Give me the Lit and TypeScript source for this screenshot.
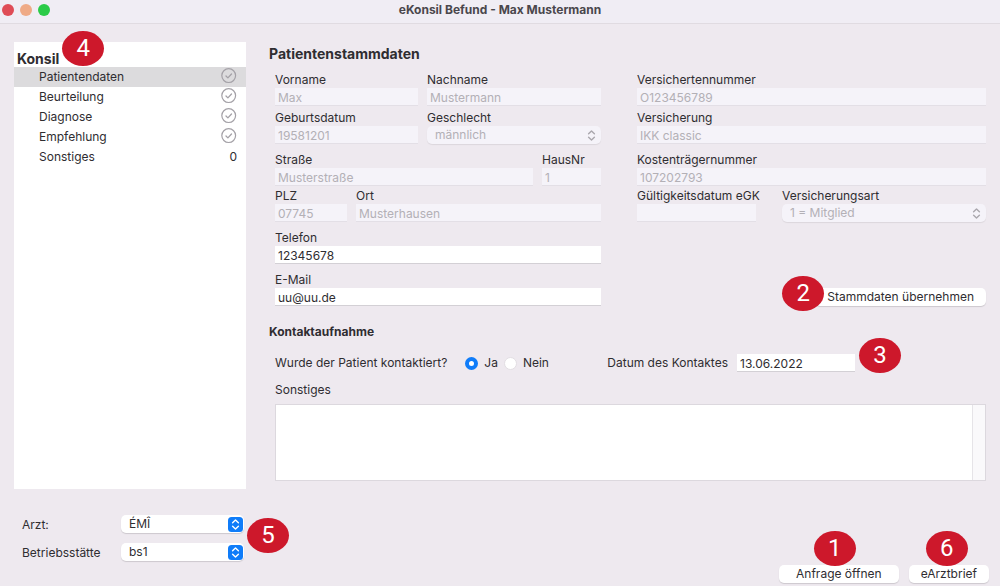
import { LitElement, html, css, svg, nothing } from "lit";
import { customElement, property, state } from "lit/decorators.js";

const base = css`
  *,
  *::before,
  *::after {
    box-sizing: border-box;
  }
  input,
  select,
  button,
  textarea {
    font: inherit;
    color: inherit;
    margin: 0;
    border: 0;
    outline: none;
  }
`;

/** Numbered red marker. The host is positioned by whoever places it. */
@customElement("step-badge")
export class StepBadge extends LitElement {
  static styles = css`
    :host {
      display: flex;
      align-items: center;
      justify-content: center;
      width: 42px;
      height: 35px;
      border-radius: 50%;
      background: #cd182b;
      color: #fff;
      font-family: "Liberation Sans Narrow", Roboto, sans-serif;
      font-size: 24px;
      font-weight: 400;
      line-height: 35px;
      pointer-events: none;
    }
  `;
  render() {
    return html`<slot></slot>`;
  }
}

/** Rounded pop-up menu with a double chevron at its right end. */
@customElement("popup-select")
export class PopupSelect extends LitElement {
  @property() label = "";
  @property() value = "";
  @property({ type: Boolean }) disabled = false;
  @property({ type: Boolean }) stacked = false;

  static styles = [
    base,
    css`
      :host {
        display: block;
        min-width: 0;
      }
      .row {
        display: flex;
        align-items: center;
      }
      .row label {
        width: 99px;
        line-height: 18px;
        padding-top: 2px;
      }
      .stack label {
        display: block;
        line-height: 16px;
      }
      .box {
        position: relative;
        flex: 1;
      }
      select {
        display: block;
        appearance: none;
        width: 100%;
        height: 18px;
        padding: 0 20px 1px 8px;
        border-radius: 5px;
        background: #fff;
        box-shadow: 0 1px 1px rgba(0, 0, 0, 0.14);
      }
      select:disabled {
        background: #f5f3f9;
        color: #b3b0b6;
        opacity: 1;
        box-shadow: 0 1px 1px rgba(0, 0, 0, 0.08);
      }
      svg {
        position: absolute;
        right: 1px;
        top: 2px;
        width: 15px;
        height: 15px;
        pointer-events: none;
      }
      .stack svg {
        right: 2px;
      }
    `,
  ];

  render() {
    return html`<div class=${this.stacked ? "stack" : "row"}>
      <label for="s">${this.label}</label>
      <div class="box">
        <select id="s" ?disabled=${this.disabled}>
          <option>${this.value}</option>
        </select>
        <svg viewBox="0 0 15 15" aria-hidden="true">
          ${this.disabled
            ? nothing
            : svg`<rect width="15" height="15" rx="3.5" fill="#0f7cf9"/>`}
          <path
            d="M4.6 5.7 7.5 2.9l2.9 2.8M4.6 9.3l2.9 2.8 2.9-2.8"
            fill="none"
            stroke=${this.disabled ? "#aaa7ad" : "#fff"}
            stroke-width="1.4"
            stroke-linecap="round"
            stroke-linejoin="round"
          />
        </svg>
      </div>
    </div>`;
  }
}

/** Caption above a flat text box. */
@customElement("text-field")
export class TextField extends LitElement {
  @property() label = "";
  @property() value = "";
  @property({ type: Boolean }) disabled = false;

  static styles = [
    base,
    css`
      :host {
        display: block;
        min-width: 0;
      }
      label {
        display: block;
        line-height: 16px;
        white-space: nowrap;
      }
      input {
        display: block;
        width: 100%;
        height: 18px;
        padding: 1px 3px 0;
        background: #fff;
        border-bottom: 1px solid #d3d0d5;
      }
      input:disabled {
        background: #f5f3f9;
        border-color: #e3dfe6;
        color: #b3b0b6;
      }
    `,
  ];

  render() {
    return html`<label for="i">${this.label}</label>
      <input id="i" type="text" .value=${this.value} ?disabled=${this.disabled} />`;
  }
}

interface Section {
  name: string;
  count?: number;
}

@customElement("app-root")
export class AppRoot extends LitElement {
  @state() private active = "Patientendaten";
  @state() private contacted = true;

  private sections: Section[] = [
    { name: "Patientendaten" },
    { name: "Beurteilung" },
    { name: "Diagnose" },
    { name: "Empfehlung" },
    { name: "Sonstiges", count: 0 },
  ];

  static styles = [
    base,
    css`
      :host {
        display: flex;
        flex-direction: column;
        min-height: 100vh;
        background: #eee9ef;
        color: #2f2d31;
        font-family: Inter, "Liberation Sans", sans-serif;
        font-size: 12px;
        line-height: 16px;
      }
      .titlebar {
        display: grid;
        grid-template-columns: 1fr auto 1fr;
        align-items: center;
        height: 24px;
        padding: 0 2px 3px;
        background: #f0edf4;
        border-bottom: 1px solid #e0dbe1;
      }
      .lights {
        display: flex;
        gap: 6px;
      }
      .light {
        width: 12px;
        height: 12px;
        border-radius: 50%;
      }
      .red {
        background: #df4c56;
      }
      .amber {
        background: #efaa86;
      }
      .green {
        background: #2bcb48;
      }
      .title {
        margin: 0;
        font-size: 12px;
        line-height: 16px;
        font-weight: 700;
        color: #4a474c;
      }
      .content {
        flex: 1;
        display: grid;
        grid-template-columns: 232px 1fr;
        gap: 23px;
        padding: 18px 14px 0;
      }
      .sidebar {
        background: #fff;
        padding-top: 9px;
      }
      .heading {
        position: relative;
        width: fit-content;
        margin: 0 0 0 3px;
        font-size: 14px;
        line-height: 16px;
        font-weight: 700;
      }
      .sections {
        list-style: none;
        margin: 0;
        padding: 0;
      }
      .section {
        display: flex;
        align-items: center;
        justify-content: space-between;
        width: 100%;
        height: 20px;
        padding: 0 9px 0 25px;
        background: none;
        text-align: left;
      }
      .section.active {
        background: #dcdbdd;
      }
      .check {
        width: 16px;
        height: 18px;
      }
      h2 {
        margin: 0;
        font-weight: 700;
      }
      .big {
        font-size: 14px;
        line-height: 18px;
        padding-top: 3px;
      }
      .small {
        font-size: 12px;
        line-height: 16px;
        margin-top: 18px;
      }
      .inset {
        padding-left: 6px;
      }
      .columns {
        display: grid;
        grid-template-columns: 326fr 349fr;
        gap: 36px;
        padding-top: 9px;
      }
      .pair {
        display: grid;
        gap: 9px;
      }
      .group {
        display: flex;
        flex-direction: column;
        gap: 4px;
      }
      .group.tight {
        gap: 2px;
      }
      .fields {
        display: flex;
        flex-direction: column;
        gap: 8px;
      }
      .names {
        grid-template-columns: 143fr 174fr;
      }
      .street {
        grid-template-columns: 1fr 59px;
      }
      .city {
        grid-template-columns: 72px 1fr;
      }
      .insurance {
        grid-template-columns: 119px 1fr;
        gap: 26px;
      }
      .action {
        display: flex;
        justify-content: flex-end;
        margin-top: auto;
      }
      .anchor {
        position: relative;
        display: flex;
      }
      .push {
        height: 18px;
        padding: 0 12px;
        border-radius: 5px;
        background: #fff;
        box-shadow: 0 1px 1px rgba(0, 0, 0, 0.14);
        line-height: 18px;
        white-space: nowrap;
      }
      .contact {
        display: flex;
        align-items: center;
        height: 18px;
        margin-top: 14px;
      }
      .radios {
        display: flex;
        align-items: center;
        margin: 0 auto 0 18px;
        gap: 6px;
      }
      .radio {
        display: flex;
        align-items: center;
        gap: 6px;
      }
      .radio input {
        appearance: none;
        width: 13px;
        height: 13px;
        border-radius: 50%;
        background: #fff;
        border: 1px solid #e2dee3;
      }
      .radio input:checked {
        border: 4px solid #0f7cf9;
      }
      .date {
        display: flex;
        align-items: center;
        gap: 9px;
        margin-right: 131px;
      }
      .date input {
        width: 118px;
        height: 18px;
        padding: 1px 3px 0;
        background: #fff;
        border-bottom: 1px solid #d3d0d5;
      }
      .notes-label {
        display: block;
        margin-top: 10px;
        line-height: 16px;
      }
      .notes {
        display: flex;
        height: 77px;
        margin-top: 6px;
        background: #fff;
        border: 1px solid #dcd8de;
      }
      .notes textarea {
        flex: 1;
        resize: none;
        overflow: hidden;
        padding: 2px 3px;
        background: none;
      }
      .track {
        width: 13px;
        background: #faf9fb;
        border-left: 1px solid #e6e4e8;
      }
      .footer {
        display: flex;
        justify-content: space-between;
        align-items: flex-end;
        padding: 25px 11px 3px 22px;
      }
      .practice {
        position: relative;
        display: flex;
        flex-direction: column;
        gap: 8px;
        width: 222px;
        padding-bottom: 21px;
      }
      .buttons {
        display: flex;
        gap: 10px;
      }
      .wide {
        padding: 0 17px;
      }
      step-badge {
        position: absolute;
        z-index: 1;
      }
      .on-heading {
        left: 100%;
        bottom: 1px;
        margin-left: 3px;
      }
      .on-left {
        right: 100%;
        margin-right: -9px;
        top: -12px;
      }
      .on-right {
        left: 100%;
        margin-left: 4px;
        top: -16px;
      }
      .on-top {
        left: calc(50% - 25px);
        bottom: 17px;
      }
      .on-top.center {
        left: calc(50% - 23px);
      }
      .on-practice {
        left: 100%;
        margin-left: 3px;
        top: 4px;
      }
    `,
  ];

  private renderSection(s: Section) {
    return html`<li>
      <button
        class="section ${s.name === this.active ? "active" : ""}"
        @click=${() => (this.active = s.name)}
      >
        <span>${s.name}</span>
        ${s.count === undefined
          ? html`<svg class="check" viewBox="0 0 16 18" aria-hidden="true">
              <g fill="none" stroke="#a4a1a7" stroke-width="1.2">
                <circle cx="7.7" cy="7.6" r="6.9" />
                <path
                  d="M5 8 6.9 9.9l3.6-3.9"
                  stroke-width="1.3"
                  stroke-linecap="round"
                  stroke-linejoin="round"
                />
              </g>
            </svg>`
          : html`<span>${s.count}</span>`}
      </button>
    </li>`;
  }

  render() {
    return html`
      <header class="titlebar">
        <div class="lights">
          <span class="light red"></span>
          <span class="light amber"></span>
          <span class="light green"></span>
        </div>
        <h1 class="title">eKonsil Befund - Max Mustermann</h1>
      </header>

      <div class="content">
        <nav class="sidebar">
          <h2 class="heading">
            Konsil<step-badge class="on-heading">4</step-badge>
          </h2>
          <ul class="sections">
            ${this.sections.map((s) => this.renderSection(s))}
          </ul>
        </nav>

        <main>
          <h2 class="big">Patientenstammdaten</h2>
          <div class="inset columns">
            <div class="fields">
              <div class="group">
                <div class="pair names">
                  <text-field label="Vorname" value="Max" disabled></text-field>
                  <text-field label="Nachname" value="Mustermann" disabled></text-field>
                </div>
                <div class="pair names">
                  <text-field label="Geburtsdatum" value="19581201" disabled></text-field>
                  <popup-select stacked label="Geschlecht" value="männlich" disabled></popup-select>
                </div>
              </div>
              <div class="group tight">
                <div class="pair street">
                  <text-field label="Straße" value="Musterstraße" disabled></text-field>
                  <text-field label="HausNr" value="1" disabled></text-field>
                </div>
                <div class="pair city">
                  <text-field label="PLZ" value="07745" disabled></text-field>
                  <text-field label="Ort" value="Musterhausen" disabled></text-field>
                </div>
              </div>
              <text-field label="Telefon" value="12345678"></text-field>
              <text-field label="E-Mail" value="uu@uu.de"></text-field>
            </div>

            <div class="fields">
              <div class="group">
                <text-field label="Versichertennummer" value="O123456789" disabled></text-field>
                <text-field label="Versicherung" value="IKK classic" disabled></text-field>
              </div>
              <div class="group tight">
                <text-field label="Kostenträgernummer" value="107202793" disabled></text-field>
                <div class="pair insurance">
                  <text-field label="Gültigkeitsdatum eGK" disabled></text-field>
                  <popup-select stacked label="Versicherungsart" value="1 = Mitglied" disabled></popup-select>
                </div>
              </div>
              <div class="action">
                <div class="anchor">
                  <button class="push">Stammdaten übernehmen</button>
                  <step-badge class="on-left">2</step-badge>
                </div>
              </div>
            </div>
          </div>

          <h2 class="small">Kontaktaufnahme</h2>
          <div class="inset">
            <div class="contact">
              <span id="question">Wurde der Patient kontaktiert?</span>
              <div class="radios" role="radiogroup" aria-labelledby="question">
                <label class="radio"
                  ><input
                    type="radio"
                    name="contacted"
                    .checked=${this.contacted}
                    @change=${() => (this.contacted = true)}
                  />Ja</label
                >
                <label class="radio"
                  ><input
                    type="radio"
                    name="contacted"
                    .checked=${!this.contacted}
                    @change=${() => (this.contacted = false)}
                  />Nein</label
                >
              </div>
              <div class="date">
                <label for="date">Datum des Kontaktes</label>
                <div class="anchor">
                  <input id="date" type="text" value="13.06.2022" />
                  <step-badge class="on-right">3</step-badge>
                </div>
              </div>
            </div>
            <label class="notes-label" for="notes">Sonstiges</label>
            <div class="notes">
              <textarea id="notes"></textarea>
              <div class="track"></div>
            </div>
          </div>
        </main>
      </div>

      <footer class="footer">
        <div class="practice">
          <popup-select label="Arzt:" value="ÉMÎ"></popup-select>
          <popup-select label="Betriebsstätte" value="bs1"></popup-select>
          <step-badge class="on-practice">5</step-badge>
        </div>
        <div class="buttons">
          <div class="anchor">
            <button class="push wide">Anfrage öffnen</button>
            <step-badge class="on-top">1</step-badge>
          </div>
          <div class="anchor">
            <button class="push">eArztbrief</button>
            <step-badge class="on-top center">6</step-badge>
          </div>
        </div>
      </footer>
    `;
  }
}
